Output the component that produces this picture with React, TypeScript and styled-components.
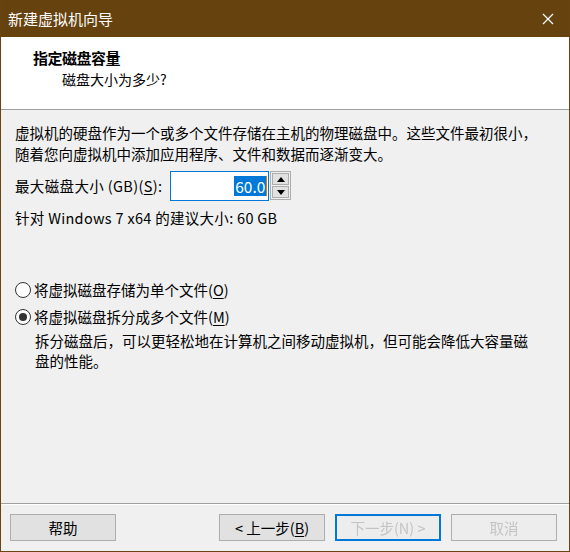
import styled, { createGlobalStyle } from "styled-components";

const GlobalStyle = createGlobalStyle`
	html, body {
		margin: 0;
		padding: 0;
		background: #f0f0f0;
	}
	* {
		box-sizing: border-box;
	}
`;

const FONT = `"Noto Sans CJK SC", "Noto Sans", "Liberation Sans", sans-serif`;

const Window = styled.div`
	display: flex;
	flex-direction: column;
	width: 570px;
	height: 552px;
	background: #f0f0f0;
	border: 1px solid #674412;
	border-top: none;
	font-family: ${FONT};
	color: #000;
	overflow: hidden;
`;

const TitleBar = styled.div`
	display: flex;
	align-items: center;
	justify-content: space-between;
	height: 37px;
	padding: 0 16px 0 8px;
	margin: 0 -1px;
	background: #66420f;
	color: #fff;
	font-size: 15px;
	line-height: 1;
`;

const CloseIcon = () => (
	<svg width="12" height="12" viewBox="0 0 12 12">
		<path d="M1 1 L11 11 M11 1 L1 11" stroke="#fff" strokeWidth="1.2" />
	</svg>
);

const Header = styled.div`
	display: flex;
	flex-direction: column;
	height: 73px;
	padding: 11px 0 0 32px;
	background: #fff;
	border-bottom: 1px solid #a0a0a0;
`;

const HeaderTitle = styled.div`
	font-size: 15px;
	font-weight: bold;
	line-height: 19px;
	letter-spacing: -0.5px;
`;

const HeaderSubtitle = styled.div`
	font-size: 14px;
	line-height: 18px;
	margin-top: 3px;
	padding-left: 29px;
`;

const Body = styled.div`
	flex: 1;
	display: flex;
	flex-direction: column;
	padding: 12px 14px 0 14px;
	font-size: 14.5px;
	line-height: 21px;
`;

const Paragraph = styled.div`
	white-space: nowrap;
`;

const SizeRow = styled.div`
	display: flex;
	align-items: center;
	gap: 8px;
	margin-top: 6px;
	height: 31px;
`;

const SizeLabel = styled.span`
	letter-spacing: 0.35px;
`;

const SizeField = styled.div`
	display: flex;
	align-items: center;
`;

const Input = styled.div`
	display: flex;
	align-items: center;
	justify-content: flex-end;
	width: 99px;
	height: 30px;
	padding-right: 1px;
	background: #fff;
	border: 1px solid #0078d7;
	font-size: 15.5px;
`;

const Selected = styled.span`
	background: #0078d7;
	color: #fff;
	line-height: 20px;
	padding: 0 1px;
	border-right: 1px solid #e08000;
`;

const Spinner = styled.div`
	display: flex;
	flex-direction: column;
	gap: 1px;
	margin-left: 1px;
	padding: 1px;
	border: 1px solid #adadad;
	background: #f0f0f0;
`;

const SpinButton = styled.div`
	display: flex;
	align-items: center;
	justify-content: center;
	width: 17px;
	height: 12px;
	background: #e1e1e1;
	border: 1px solid #adadad;
`;

const Arrow = ({ up }: { up?: boolean }) => (
	<svg width="8" height="5" viewBox="0 0 8 5">
		<path d={up ? "M0 5 L4 0 L8 5 Z" : "M0 0 L8 0 L4 5 Z"} fill="#000" />
	</svg>
);

const Recommend = styled.div`
	margin-top: 6px;
	letter-spacing: 0.3px;
`;

const Options = styled.div`
	display: flex;
	flex-direction: column;
	margin-top: 48px;
`;

const RadioRow = styled.div`
	display: flex;
	align-items: center;
	gap: 3px;
	height: 27px;
`;

const RadioCircle = styled.span<{ $checked?: boolean }>`
	display: flex;
	align-items: center;
	justify-content: center;
	width: 16px;
	height: 16px;
	border-radius: 50%;
	border: 1px solid #333;
	background: #fff;
	&::after {
		content: "";
		display: ${({ $checked }) => ($checked ? "block" : "none")};
		width: 8px;
		height: 8px;
		border-radius: 50%;
		background: #333;
	}
`;

const Key = styled.span`
	text-decoration: underline;
	text-underline-offset: 2px;
`;

const Description = styled.div`
	display: flex;
	flex-direction: column;
	padding-left: 20px;
	margin-top: 1px;
`;

const DescLine = styled.div`
	height: 20px;
	line-height: 20px;
	white-space: nowrap;
`;

const Footer = styled.div`
	display: flex;
	align-items: center;
	height: 48px;
	padding: 0 12px 0 9px;
	border-top: 1px solid #a0a0a0;
	box-shadow: inset 0 1px 0 #fff;
`;

const Button = styled.div<{ $default?: boolean; $faded?: boolean }>`
	display: flex;
	align-items: center;
	justify-content: center;
	width: 106px;
	height: 27px;
	background: ${({ $faded }) => ($faded ? "#ededed" : "#e1e1e1")};
	border: ${({ $default }) => ($default ? "2px solid #0078d7" : "1px solid #adadad")};
	font-size: 14.5px;
	color: ${({ $faded }) => ($faded ? "#c4c4c4" : "#000")};
	filter: ${({ $faded }) => ($faded ? "blur(0.6px)" : "none")};
`;

const Spacer = styled.div`
	flex: 1;
`;

const ButtonGroup = styled.div`
	display: flex;
	gap: 10px;
`;

export default function App() {
	return (
		<>
			<GlobalStyle />
			<Window>
				<TitleBar>
					<span>新建虚拟机向导</span>
					<CloseIcon />
				</TitleBar>
				<Header>
					<HeaderTitle>指定磁盘容量</HeaderTitle>
					<HeaderSubtitle>磁盘大小为多少?</HeaderSubtitle>
				</Header>
				<Body>
					<Paragraph>
						虚拟机的硬盘作为一个或多个文件存储在主机的物理磁盘中。这些文件最初很小，
					</Paragraph>
					<Paragraph>随着您向虚拟机中添加应用程序、文件和数据而逐渐变大。</Paragraph>
					<SizeRow>
						<SizeLabel>
							最大磁盘大小 (GB)(<Key>S</Key>):
						</SizeLabel>
						<SizeField>
							<Input>
								<Selected>60.0</Selected>
							</Input>
							<Spinner>
								<SpinButton>
									<Arrow up />
								</SpinButton>
								<SpinButton>
									<Arrow />
								</SpinButton>
							</Spinner>
						</SizeField>
					</SizeRow>
					<Recommend>针对 Windows 7 x64 的建议大小: 60 GB</Recommend>
					<Options>
						<RadioRow>
							<RadioCircle />
							<span>
								将虚拟磁盘存储为单个文件(<Key>O</Key>)
							</span>
						</RadioRow>
						<RadioRow>
							<RadioCircle $checked />
							<span>
								将虚拟磁盘拆分成多个文件(<Key>M</Key>)
							</span>
						</RadioRow>
						<Description>
							<DescLine>
								拆分磁盘后，可以更轻松地在计算机之间移动虚拟机，但可能会降低大容量磁
							</DescLine>
							<DescLine>盘的性能。</DescLine>
						</Description>
					</Options>
				</Body>
				<Footer>
					<Button>帮助</Button>
					<Spacer />
					<ButtonGroup>
						<Button>
							&lt; 上一步(<Key>B</Key>)
						</Button>
						<Button $default $faded>
							下一步(N) &gt;
						</Button>
						<Button $faded>取消</Button>
					</ButtonGroup>
				</Footer>
			</Window>
		</>
	);
}
